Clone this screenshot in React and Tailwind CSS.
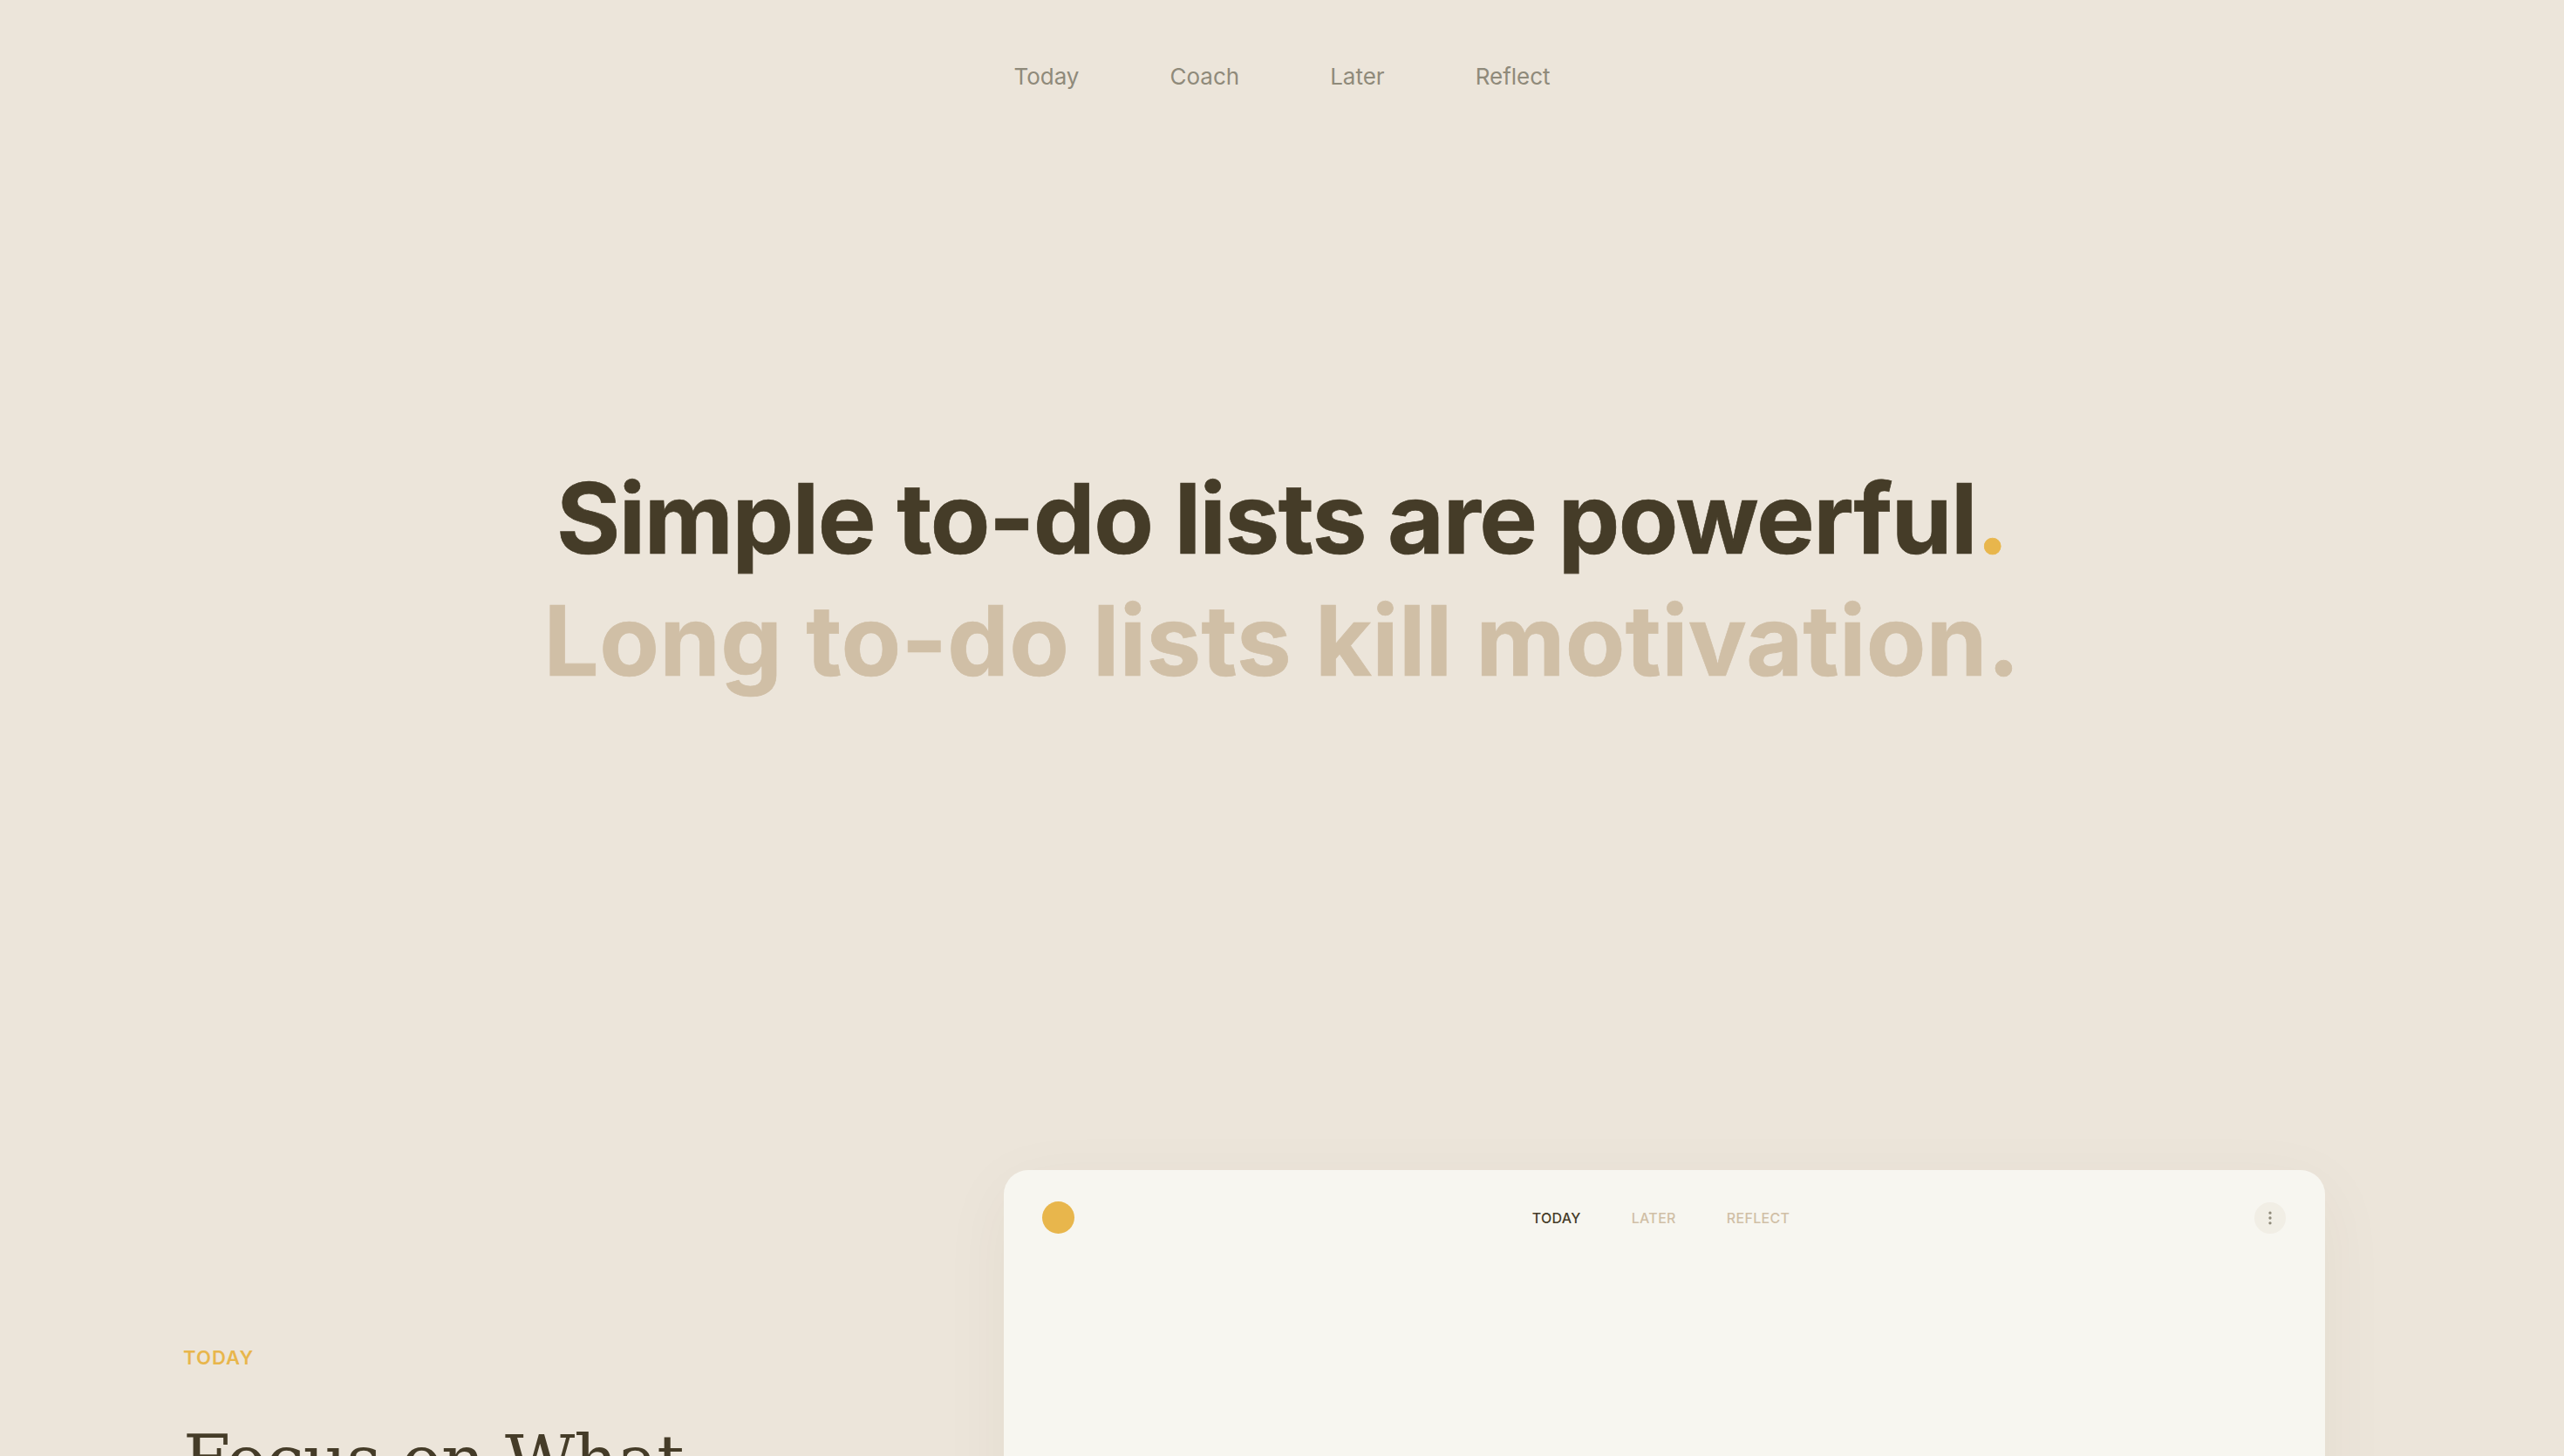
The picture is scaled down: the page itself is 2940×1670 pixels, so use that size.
import React from 'react';
import { EllipsisVertical } from 'lucide-react';

const navItems = ['Today', 'Coach', 'Later', 'Reflect'];

function TopNav() {
  return (
    <nav className="flex justify-center gap-[104px] pt-[68px] text-[26px] leading-[40px] text-[#8f8a7a]">
      {navItems.map((item) => (
        <a key={item} href="#">{item}</a>
      ))}
    </nav>
  );
}

function Hero() {
  return (
    <section className="pt-[416px] text-center text-[112px] font-bold leading-[140px] [-webkit-text-stroke:0.7px_currentColor]">
      <h1 className="tracking-[-0.0125em] text-[#453c28]">
        Simple to-do lists are powerful<span className="text-[#e8b64c]">.</span>
      </h1>
      <p className="tracking-[0.34px] text-[#d0bfa6]">Long to-do lists kill motivation.</p>
    </section>
  );
}

function AppCard() {
  return (
    <div className="h-[900px] w-[1515px] rounded-[28px] bg-[#f7f6f0] shadow-[0_20px_80px_rgba(69,60,40,0.05)]">
      <div className="flex items-center justify-between pl-[44px] pr-[45px] pt-[36px]">
        <div className="h-[37px] w-[37px] rounded-full bg-[#e8b64c]" />
        <div className="mr-[8px] flex gap-[58px] text-[16px] font-medium uppercase leading-[24px] tracking-[0.02em] text-[#d0bfa6]">
          <span className="text-[#453c28]">Today</span>
          <span>Later</span>
          <span>Reflect</span>
        </div>
        <button className="flex h-[36px] w-[36px] items-center justify-center rounded-full bg-[#ece5da]/50 text-[#8f8a7a]">
          <EllipsisVertical size={20} />
        </button>
      </div>
    </div>
  );
}

export default function App() {
  return (
    <div className="h-screen overflow-hidden bg-[#ece5da] font-['Inter',sans-serif]">
      <TopNav />
      <Hero />
      <section className="mt-[538px] flex pl-[210px]">
        <div className="w-[941px] pt-[199px]">
          <div className="text-[22px] font-semibold uppercase leading-[32px] tracking-[0.05em] text-[#e8b64c]">Today</div>
          <h2 className="mt-[46px] max-w-[640px] font-['DejaVu_Serif',serif] text-[78px] leading-[112px] tracking-[-0.012em] text-[#453c28]">
            Focus on What Matters
          </h2>
        </div>
        <AppCard />
      </section>
    </div>
  );
}
